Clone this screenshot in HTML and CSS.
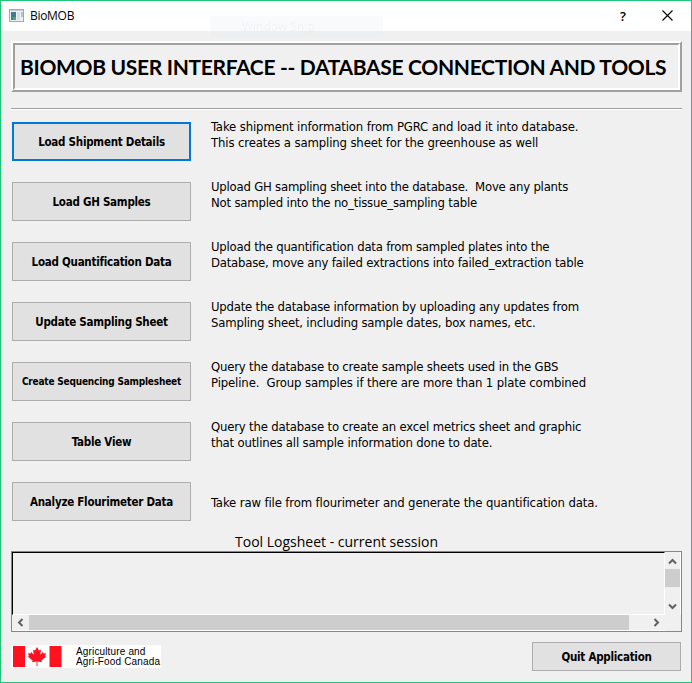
FILE: index.html
```html
<!DOCTYPE html>
<html lang="en">
<head>
<meta charset="utf-8">
<title>BioMOB</title>
<link rel="stylesheet" href="styles.css">
</head>
<body>
<div class="window">
  <header class="titlebar">
    <svg class="app-icon" width="15" height="13" viewBox="0 0 15 13"><rect x=".5" y=".5" width="14" height="12" fill="#eef0f2" stroke="#a5a9ae"/><path d="M1 1.5h13" stroke="#c8cdd2"/><rect x="2" y="3" width="5" height="8" fill="#3f7f86"/><rect x="2" y="3" width="2" height="4" fill="#4a6fa0"/><rect x="4" y="8" width="3" height="3" fill="#57a07a"/><rect x="8" y="3" width="3" height="8" fill="#dcdfe2"/><rect x="12" y="3" width="2" height="5" fill="#a9c9c4"/></svg>
    <span class="app-name">BioMOB</span>
    <span class="help">?</span>
    <svg class="close" width="11" height="11" viewBox="0 0 11 11"><path d="M.5.5l10 10M10.5.5l-10 10" stroke="#000" stroke-width="1.1"/></svg>
  </header>
  <div class="ghost"><span>Window Snip</span></div>
  <main class="content">
    <div class="banner"><h1>BIOMOB USER INTERFACE -- DATABASE CONNECTION AND TOOLS</h1></div>
    <div class="rule"></div>
    <section class="tools">
      <div class="tool"><button class="btn focused">Load Shipment Details</button><p class="loose">Take shipment information from PGRC and load it into database.<br>This creates a sampling sheet for the greenhouse as well</p></div>
      <div class="tool"><button class="btn">Load GH Samples</button><p>Upload GH sampling sheet into the database.&nbsp; Move any plants<br><span class="mid">Not sampled into the no_tissue_sampling table</span></p></div>
      <div class="tool"><button class="btn">Load Quantification Data</button><p>Upload the quantification data from sampled plates into the<br>Database, move any failed extractions into failed_extraction table</p></div>
      <div class="tool"><button class="btn">Update Sampling Sheet</button><p>Update the database information by uploading any updates from<br><span class="mid">Sampling sheet, including sample dates, box names, etc.</span></p></div>
      <div class="tool"><button class="btn small">Create Sequencing Samplesheet</button><p><span class="mid">Query the database to create sample sheets used in the GBS</span><br><span class="loose">Pipeline.&nbsp; Group samples if there are more than 1 plate combined</span></p></div>
      <div class="tool"><button class="btn">Table View</button><p class="mid">Query the database to create an excel metrics sheet and graphic<br>that outlines all sample information done to date.</p></div>
      <div class="tool last"><button class="btn">Analyze Flourimeter Data</button><p class="loose">Take raw file from flourimeter and generate the quantification data.</p></div>
    </section>
    <h2 class="log-title">Tool Logsheet - current session</h2>
    <div class="log">
      <div class="log-text"></div>
      <div class="vbar">
        <svg width="9" height="7" viewBox="0 0 9 7"><path d="M1 5.500l3.500-3.500 3.500 3.500" fill="none" stroke="#606060" stroke-width="2"/></svg>
        <div class="vthumb"></div>
        <svg width="9" height="7" viewBox="0 0 9 7"><path d="M1 1.500l3.500 3.500 3.500-3.500" fill="none" stroke="#606060" stroke-width="2"/></svg>
      </div>
      <div class="hbar">
        <svg width="7" height="9" viewBox="0 0 7 9"><path d="M5.500 1l-3.500 3.500 3.500 3.500" fill="none" stroke="#606060" stroke-width="2"/></svg>
        <div class="hthumb"></div>
        <svg class="right" width="7" height="9" viewBox="0 0 7 9"><path d="M1.500 1l3.500 3.500-3.500 3.500" fill="none" stroke="#606060" stroke-width="2"/></svg>
      </div>
      <div class="corner"></div>
    </div>
    <footer class="footer">
      <div class="logo">
        <svg width="49" height="21" viewBox="0 0 49 21"><g fill="#fe1220"><path d="M0 0h12v21H0zM36.500 0H48.500v21H36.500zM24 1l2 3.500 2-.8-.8 5 2.600-2.600.7 1.500 2.600-.4-1 2.800 1 .8-4.700 3.600.5 1.900-4.500-.7.1 4.400h-1l.1-4.400-4.500.7.5-1.900-4.700-3.600 1-.8-1-2.800 2.600.4.7-1.500 2.600 2.600-.8-5 2 .8z"/></g></svg>
        <div class="logo-text">Agriculture and<br>Agri-Food Canada</div>
      </div>
      <button class="btn quit">Quit Application</button>
    </footer>
  </main>
</div>
</body>
</html>
```
FILE: styles.css
```css
* { box-sizing: border-box; }
body { margin: 0; background: #f0f0f0; color: #000; font: 13px/16px "DejaVu Sans Condensed", "DejaVu Sans", sans-serif; }
.window { position: relative; width: 692px; height: 683px; border: 1px solid #21c57a; overflow: hidden; background: #f0f0f0; }
.titlebar { height: 30px; background: #fff; display: flex; align-items: center; padding: 0 8px; }
.app-icon { margin-bottom: 2px; }
.app-name { margin-left: 6px; font: 12px/16px "Open Sans", sans-serif; letter-spacing: -0.3px; }
.help { margin-left: auto; margin-right: 36px; margin-bottom: 1px; font: 600 13px/16px "Open Sans", sans-serif; }
.close { margin-right: 10px; margin-bottom: 1px; }
.ghost { position: absolute; left: 209px; top: 15px; width: 173px; height: 21px; background: rgba(225, 230, 240, .2); color: rgba(0, 0, 0, .05); font: 12px/22px "Open Sans", sans-serif; padding-left: 32px; }
.content { padding: 10px 9px 0 10px; }
.banner { height: 51px; border: 2px solid; border-color: #fff #a0a0a0 #a0a0a0 #fff; }
.banner h1 { margin: 0; height: 47px; border: 2px solid; border-color: #a0a0a0 #fff #fff #a0a0a0; padding-left: 5px; font: 700 21px/43px Lato, sans-serif; letter-spacing: -0.32px; white-space: nowrap; }
.rule { margin-top: 16px; height: 2px; border-top: 1px solid #a0a0a0; background: #fff; }
.tools { margin: 12px 0 0 1px; }
.tool { display: flex; height: 60px; gap: 20px; }
.tool p { margin: -3px 0 0; white-space: nowrap; letter-spacing: -0.22px; }
.tool .mid { letter-spacing: -0.19px; }
.tool .loose { letter-spacing: -0.13px; }
.tool.last p { margin-top: 13px; }
.btn { width: 179px; height: 39px; padding: 0; border: 1px solid #adadad; background: #e1e1e1; color: #000; font: 700 11.5px/16px "DejaVu Sans Condensed", "DejaVu Sans", sans-serif; letter-spacing: -0.25px; text-align: center; white-space: nowrap; }
.btn.focused { border: 2px solid #0078d7; }
.btn.small { font-size: 10px; letter-spacing: -0.2px; }
.log-title { margin: -10px 0 0 224px; height: 19px; font: 14px/19px "Open Sans", sans-serif; white-space: nowrap; }
.log { height: 81px; border: 1px solid #828790; display: grid; grid-template-columns: 653px 16px; grid-template-rows: 63px 16px; }
.log-text { border-top: 1px solid #000; border-left: 1px solid #000; border-right: 1px solid #fff; border-bottom: 1px solid #fff; }
.vbar { display: flex; flex-direction: column; align-items: center; padding: 6px 0 5px; border-right: 1px solid #fff; }
.vthumb { width: 15px; height: 18px; margin: 4px 0 auto; background: #cdcdcd; }
.hbar { display: flex; align-items: center; padding-left: 5px; border-bottom: 1px solid #fff; }
.hthumb { width: 600px; height: 15px; margin-left: 5px; background: #cdcdcd; }
.hbar .right { margin-left: auto; margin-right: 5px; }
.footer { display: flex; justify-content: space-between; padding: 10px 1px 0 0; }
.logo { width: 150px; height: 23px; margin-top: 3px; background: #fff; display: flex; padding: 1px 0 0 2px; }
.logo-text { margin: 1px 0 0 14px; font: 10px/10px "Liberation Sans", sans-serif; letter-spacing: .15px; white-space: nowrap; }
.quit { width: 149px; height: 29px; }
```
